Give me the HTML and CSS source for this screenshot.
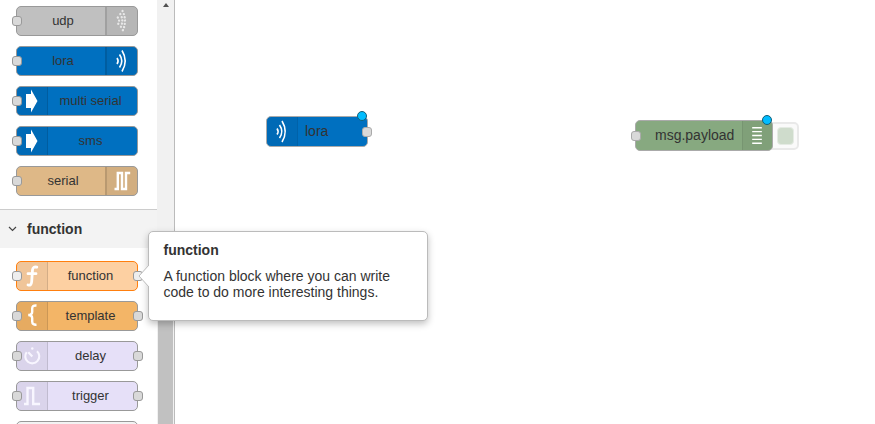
FILE: index.html
```
<!DOCTYPE html>
<html lang="en">
<head>
<meta charset="utf-8">
<title>Flow editor</title>
<link rel="stylesheet" href="styles.css">
</head>
<body>
<svg class="defs" aria-hidden="true">
  <symbol id="waves" viewBox="0 0 30 28"><path d="M10 11q2.200 3 0 6M12.500 7.500q4.600 6.500 0 13M15 3.500q6.400 10.500 0 21" fill="none" stroke="currentColor" stroke-width="1.600"/></symbol>
  <symbol id="dots" viewBox="0 0 30 28"><path d="M10.800 10.500q2.600 3.500 0 7M13.300 7q4 7 0 14M15.500 4q5 10 0 20" fill="none" stroke="currentColor" stroke-width="2.300" stroke-linecap="round" stroke-dasharray=".1 3.200"/></symbol>
  <symbol id="arrow" viewBox="0 0 30 28"><path d="M9 7h5V2.500L20.500 14 14 25.500V21H9z" fill="currentColor"/></symbol>
  <symbol id="serial" viewBox="0 0 30 28"><path d="M7.500 22h3.300V6h4.200v16h4V6h4.200" fill="none" stroke="currentColor" stroke-width="2.400"/></symbol>
  <symbol id="func" viewBox="0 0 30 28"><path d="M19.800 5.200q-3.800-1-4.300 2.800l-.8 11.500q-.4 4.500-3.700 3.500M11 11.700h8" fill="none" stroke="currentColor" stroke-width="2.800" stroke-linecap="round"/></symbol>
  <symbol id="brace" viewBox="0 0 30 28"><path d="M19.500 3.500q-4.300-.3-4.300 3v3.300q0 3.200-4 3.200 4 0 4 3.200v3.300q0 3.500 4.300 3.200" fill="none" stroke="currentColor" stroke-width="2.400"/></symbol>
  <symbol id="timer" viewBox="0 0 30 28"><path d="M20 9.200a7 7 0 1 1-10.300.9M15.300 14.500l-4-4.300" fill="none" stroke="currentColor" stroke-width="2.100"/><circle cx="15.300" cy="6.500" r="1.200" fill="currentColor"/></symbol>
  <symbol id="trigger" viewBox="0 0 30 28"><path d="M7 22h3.500V6h5.700v16H23" fill="none" stroke="currentColor" stroke-width="2.400"/></symbol>
  <symbol id="lines" viewBox="0 0 30 28"><path d="M9.500 6h10M9.500 10h10M9.500 14h10M9.500 18h10M9.500 22h10" stroke="currentColor" stroke-width="1.500"/></symbol>
</svg>
<div class="editor">
  <aside class="palette">
    <div class="palette-list">
      <div class="nodes network">
        <div class="node output gray"><i class="port in"></i><span class="label">udp</span><svg class="icon"><use href="#dots"/></svg></div>
        <div class="node output blue"><i class="port in"></i><span class="label">lora</span><svg class="icon"><use href="#waves"/></svg></div>
        <div class="node blue"><i class="port in"></i><svg class="icon"><use href="#arrow"/></svg><span class="label">multi serial</span></div>
        <div class="node blue"><i class="port in"></i><svg class="icon"><use href="#arrow"/></svg><span class="label">sms</span></div>
        <div class="node output tan"><i class="port in"></i><span class="label">serial</span><svg class="icon"><use href="#serial"/></svg></div>
      </div>
      <div class="category"><svg class="chevron" viewBox="0 0 9 6"><path d="M1 1l3.500 3.500L8 1" fill="none" stroke="#444" stroke-width="1.200"/></svg>function</div>
      <div class="nodes functions">
        <div class="node active"><i class="port in"></i><svg class="icon"><use href="#func"/></svg><span class="label">function</span><i class="port out"></i></div>
        <div class="node orange"><i class="port in"></i><svg class="icon"><use href="#brace"/></svg><span class="label">template</span><i class="port out"></i></div>
        <div class="node lilac"><i class="port in"></i><svg class="icon"><use href="#timer"/></svg><span class="label">delay</span><i class="port out"></i></div>
        <div class="node lilac"><i class="port in"></i><svg class="icon"><use href="#trigger"/></svg><span class="label">trigger</span><i class="port out"></i></div>
        <div class="node pale"></div>
      </div>
    </div>
    <div class="scrollbar"><i class="scroll-up"></i><i class="thumb"></i></div>
  </aside>
  <main class="canvas">
    <div class="node flow-node flow-lora blue"><svg class="icon"><use href="#waves"/></svg><span class="label">lora</span><i class="port out"></i><i class="changed"></i></div>
    <div class="toggle"><i></i></div>
    <div class="node flow-node flow-debug output green"><i class="port in"></i><span class="label">msg.payload</span><svg class="icon"><use href="#lines"/></svg><i class="changed"></i></div>
  </main>
  <div class="tooltip">
    <svg class="pointer" viewBox="0 0 11 22"><path d="M11 0L1 11l10 11" fill="#fff" stroke="#bbb"/></svg>
    <h3>function</h3>
    <p>A function block where you can write code to do more interesting things.</p>
  </div>
</div>
</body>
</html>
```

FILE: styles.css
```
* { box-sizing: border-box; }
body {
  margin: 0;
  background: #fff;
  color: #333;
  font: 14px/16px "Liberation Sans", Arial, sans-serif;
}
.defs { position: absolute; width: 0; height: 0; }
.editor { position: relative; display: flex; height: 424px; overflow: hidden; }
.palette { display: flex; flex: none; width: 175px; border-right: 1px solid #bbb; }
.palette-list { width: 157px; }
.nodes { display: flex; flex-direction: column; gap: 10px; padding-left: 16px; }
.network { padding-top: 6px; padding-bottom: 13px; }
.functions { padding-top: 13px; }
.category {
  display: flex;
  align-items: center;
  height: 39px;
  border-top: 1px solid #ccc;
  background: #f3f3f3;
  font-weight: bold;
}
.chevron { width: 9px; height: 6px; margin: 0 10px 0 8px; }
.node {
  position: relative;
  display: flex;
  flex: none;
  align-items: center;
  width: 122px;
  height: 30px;
  border: 1px solid #999;
  border-radius: 5px;
  font-size: 13px;
}
.icon {
  flex: none;
  width: 31px;
  height: 28px;
  border-right: 1px solid rgba(0, 0, 0, .12);
  border-radius: 4px 0 0 4px;
  background: rgba(0, 0, 0, .05);
  color: #fff;
}
.output .icon {
  width: 32px;
  border-right: 0;
  border-left: 2px solid rgba(0, 0, 0, .12);
  border-radius: 0 4px 4px 0;
}
.label { flex: 1; padding-right: 4px; text-align: center; white-space: nowrap; }
.output .label { padding: 0 0 0 4px; }
.gray { background: #c0c0c0; }
.gray .icon { color: #e8e8e8; }
.blue { background: #0070c0; }
.blue .icon { color: #fff; }
.tan { background: #deb887; }
.orange { background: #f3b567; }
.active { border-color: #ff7f0e; background: #fdd0a2; }
.lilac { background: #e6e0f8; }
.lilac .icon { color: #f8f6ff; }
.pale { background: #f3f3f3; }
.green { background: #87a980; }
.port {
  position: absolute;
  top: 9px;
  width: 10px;
  height: 10px;
  border: 1px solid #999;
  border-radius: 3px;
  background: #d9d9d9;
}
.active .port { background: #eee; }
.port.in { left: -5px; }
.port.out { right: -6px; }
.scrollbar { display: flex; flex-direction: column; align-items: center; width: 17px; background: #f1f1f1; }
.scroll-up { margin-top: 3px; border: 3px solid transparent; border-top: 0; border-bottom: 4px solid #505050; }
.thumb { width: 15px; height: 180px; margin-top: auto; background: #c1c1c1; }
.canvas { position: relative; flex: 1; }
.flow-node { position: absolute; border-color: #aaa; font-size: 14px; }
.flow-lora { left: 91px; top: 116px; width: 102px; height: 31px; }
.flow-lora .label { padding: 0 0 1px 7px; text-align: left; }
.flow-debug { left: 460px; top: 120px; width: 138px; height: 31px; }
.flow-debug .label { padding: 0 0 1px 19px; text-align: left; }
.flow-node .icon { height: 29px; border-color: rgba(0, 0, 0, .07); }
.flow-lora .icon { width: 31px; }
.flow-debug .icon { width: 30px; border-left-width: 1px; }
.flow-node .port { top: 10px; border-color: #aaa; }
.flow-node .port.out { right: -5px; }
.changed {
  position: absolute;
  top: -6px;
  right: 0;
  width: 10px;
  height: 10px;
  border: 1px solid #135f78;
  border-radius: 50%;
  background: #00bcff;
}
.toggle {
  position: absolute;
  left: 591px;
  top: 122px;
  width: 33px;
  height: 28px;
  padding: 3px 4px 5px 9px;
  border: 2px solid #e9e9e9;
  border-radius: 5px;
  background: #fafafa;
}
.toggle i { display: block; width: 17px; height: 18px; border: 1px solid #e5ebe4; border-radius: 4px; background: #cfdccc; }
.tooltip {
  position: absolute;
  left: 148px;
  top: 231px;
  width: 280px;
  height: 90px;
  padding: 10px 20px 0 14.500px;
  border: 1px solid #bbb;
  border-radius: 5px;
  background: #fff;
  box-shadow: 0 3px 7px rgba(0, 0, 0, .25);
}
.tooltip h3 { margin: 0 0 10px; font-size: 14px; line-height: 16px; }
.tooltip p { margin: 0; }
.pointer { position: absolute; left: -11px; top: 33px; width: 11px; height: 22px; }
```
